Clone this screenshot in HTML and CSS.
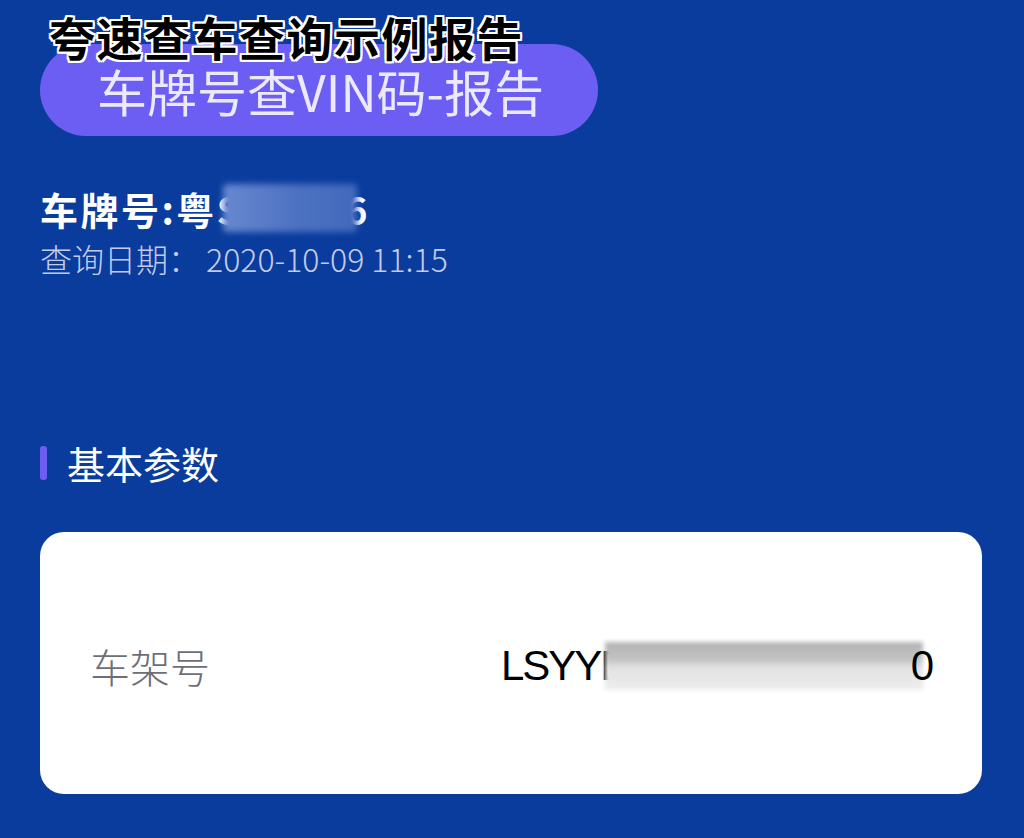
FILE: index.html
```html
<!DOCTYPE html>
<html lang="zh">
<head>
<meta charset="utf-8">
<title>车牌号查VIN码-报告</title>
<link rel="stylesheet" href="styles.css">
</head>
<body>
<div class="page">
  <div class="caption">夸速查车查询示例报告</div>
  <div class="pill">车牌号查VIN码-报告</div>
  <div class="plate">
    <span>车牌号:粤S</span><span class="blur blur-plate"></span><span>6</span>
  </div>
  <div class="date">查询日期：<span class="date-val">2020-10-09 11:15</span></div>
  <div class="section-title"><span class="bar"></span><span>基本参数</span></div>
  <div class="card">
    <div class="row">
      <span class="label">车架号</span>
      <span class="value"><span>LSYYD</span><span class="blur blur-vin"></span><span class="tail">0</span></span>
    </div>
  </div>
</div>
</body>
</html>
```
FILE: styles.css
```css
html, body {
  margin: 0;
  padding: 0;
}
body {
  background: #0a3c9d;
  font-family: "Noto Sans CJK SC", "Noto Sans", sans-serif;
  width: 1024px;
  height: 838px;
  overflow: hidden;
}
.page {
  position: relative;
  padding: 44px 42px 0 40px;
}
.caption {
  position: absolute;
  left: 49px;
  top: 4px;
  font-size: 46px;
  line-height: 64px;
  font-weight: 700;
  color: #000;
  letter-spacing: 1.5px;
  text-shadow: 2px 0 0 #fff, -2px 0 0 #fff, 0 2px 0 #fff, 0 -2px 0 #fff,
    2px 2px 0 #fff, -2px -2px 0 #fff, 2px -2px 0 #fff, -2px 2px 0 #fff;
  z-index: 2;
}
.pill {
  width: 558px;
  height: 92px;
  box-sizing: border-box;
  border-radius: 46px;
  background: #6c5ef2;
  color: #ece9ff;
  font-size: 50px;
  font-weight: 400;
  line-height: 92px;
  padding-left: 57px;
  white-space: nowrap;
}
.plate {
  display: flex;
  align-items: center;
  margin-top: 46px;
  height: 52px;
  font-size: 38px;
  letter-spacing: 2.5px;
  font-weight: 700;
  color: #fff;
}
.blur {
  display: inline-block;
  filter: blur(3px);
}
.blur-plate {
  width: 134px;
  height: 48px;
  margin-left: -20px;
  margin-right: -12px;
  background: linear-gradient(90deg, #6687cf 0%, #5a7cc8 30%, #4c72c1 55%, #4369bd 100%);
  border-radius: 4px;
}
.date {
  margin-top: 2px;
  font-size: 32px;
  font-weight: 300;
  color: #c3cbe8;
  line-height: 44px;
}
.date-val {
  margin-left: 6px;
}
.section-title {
  display: flex;
  align-items: center;
  gap: 20px;
  margin-top: 158px;
  font-size: 38px;
  color: #fff;
  line-height: 50px;
}
.bar {
  width: 7px;
  height: 34px;
  border-radius: 3px;
  background: #6c5ef2;
}
.card {
  margin-top: 44px;
  height: 262px;
  background: #fff;
  border-radius: 24px;
  display: flex;
  align-items: center;
  padding: 0 50px;
}
.row {
  flex: 1;
  display: flex;
  justify-content: space-between;
  align-items: center;
  margin-top: 6px;
}
.label {
  font-size: 40px;
  font-weight: 300;
  color: #6e6e78;
}
.value {
  display: flex;
  align-items: center;
  font-family: "Liberation Sans", sans-serif;
  font-size: 42px;
  letter-spacing: -2px;
  color: #000;
}
.blur-vin {
  width: 318px;
  height: 48px;
  margin: 0 -12px 0 -24px;
  background: linear-gradient(180deg, #b3b3b3 0%, #c4c4c4 38%, #e2e2e2 52%, #ededed 100%);
  filter: blur(2px);
}
.tail {
  position: relative;
  z-index: 1;
}
```
